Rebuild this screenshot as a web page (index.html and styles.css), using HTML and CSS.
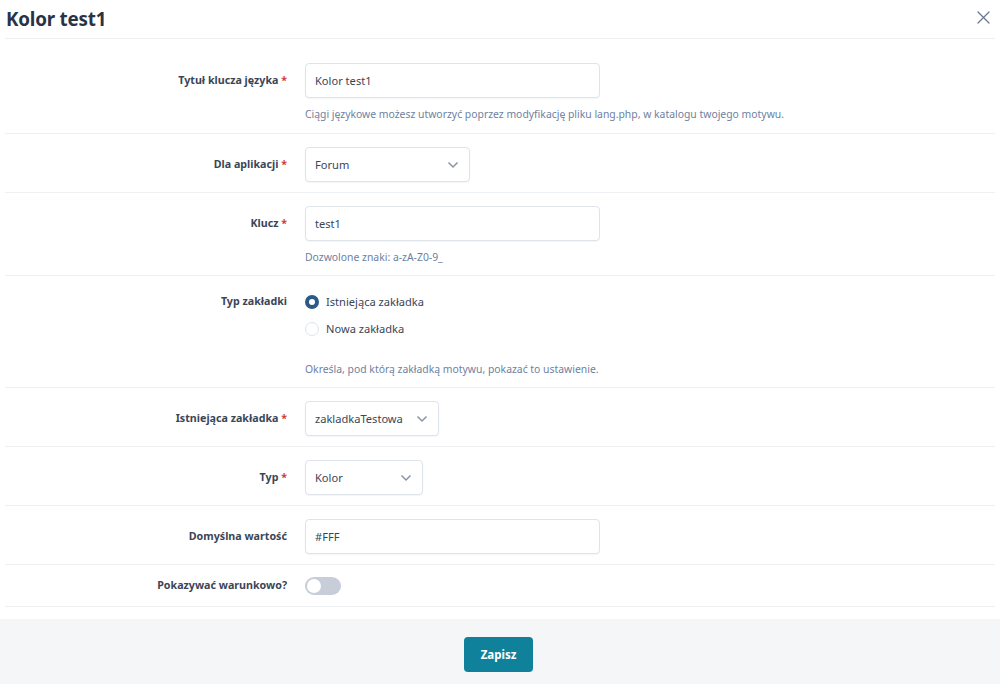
FILE: index.html
```html
<!DOCTYPE html>
<html lang="pl">
<head>
<meta charset="utf-8">
<title>Kolor test1</title>
<link rel="stylesheet" href="styles.css">
</head>
<body>
<div class="dialog">
  <header class="dialog-head">
    <h1 class="dialog-title">Kolor test1</h1>
    <button class="close" aria-label="Zamknij">
      <svg width="13" height="13" viewBox="0 0 13 13"><path d="M1 1L12 12M12 1L1 12" stroke="#6b7891" stroke-width="1.3" fill="none" stroke-linecap="round"/></svg>
    </button>
  </header>

  <form class="form">
    <div class="row row-first">
      <label class="label">Tytuł klucza języka <span class="req">*</span></label>
      <div class="field">
        <div class="input wide">Kolor test1</div>
        <p class="help">Ciągi językowe możesz utworzyć poprzez modyfikację pliku lang.php, w katalogu twojego motywu.</p>
      </div>
    </div>

    <div class="row">
      <label class="label">Dla aplikacji <span class="req">*</span></label>
      <div class="field">
        <div class="input select sel-app">Forum<span class="chev"><svg width="12" height="8" viewBox="0 0 12 8"><path d="M1.5 1.5L6 6L10.5 1.5" stroke="#8a93a6" stroke-width="1.5" fill="none"/></svg></span></div>
      </div>
    </div>

    <div class="row">
      <label class="label">Klucz <span class="req">*</span></label>
      <div class="field">
        <div class="input wide">test1</div>
        <p class="help">Dozwolone znaki: a-zA-Z0-9_</p>
      </div>
    </div>

    <div class="row row-radio">
      <label class="label">Typ zakładki</label>
      <div class="field">
        <div class="radios">
          <div class="radio-line"><span class="radio checked"></span>Istniejąca zakładka</div>
          <div class="radio-line"><span class="radio"></span>Nowa zakładka</div>
        </div>
        <p class="help help-radio">Określa, pod którą zakładką motywu, pokazać to ustawienie.</p>
      </div>
    </div>

    <div class="row">
      <label class="label">Istniejąca zakładka <span class="req">*</span></label>
      <div class="field">
        <div class="input select sel-tab">zakladkaTestowa<span class="chev"><svg width="12" height="8" viewBox="0 0 12 8"><path d="M1.5 1.5L6 6L10.5 1.5" stroke="#8a93a6" stroke-width="1.5" fill="none"/></svg></span></div>
      </div>
    </div>

    <div class="row">
      <label class="label">Typ <span class="req">*</span></label>
      <div class="field">
        <div class="input select sel-type">Kolor<span class="chev"><svg width="12" height="8" viewBox="0 0 12 8"><path d="M1.5 1.5L6 6L10.5 1.5" stroke="#8a93a6" stroke-width="1.5" fill="none"/></svg></span></div>
      </div>
    </div>

    <div class="row">
      <label class="label">Domyślna wartość</label>
      <div class="field">
        <div class="input wide">#FFF</div>
      </div>
    </div>

    <div class="row row-toggle">
      <label class="label">Pokazywać warunkowo?</label>
      <div class="field">
        <span class="toggle"><span class="knob"></span></span>
      </div>
    </div>
  </form>

  <footer class="dialog-foot">
    <button class="save" type="button">Zapisz</button>
  </footer>
</div>
</body>
</html>
```

FILE: styles.css
```css
* { box-sizing: border-box; }
html, body { margin: 0; padding: 0; background: #fff; }
body {
  font-family: "Noto Sans", "Open Sans", sans-serif;
  color: #3b4558;
  font-size: 11px;
}
.dialog { width: 1000px; height: 684px; display: flex; flex-direction: column; }
.dialog-head {
  height: 39px;
  margin: 0 5px;
  border-bottom: 1px solid #eef0f3;
  display: flex;
  align-items: center;
  justify-content: space-between;
}
.dialog-title {
  margin: -1px 0 0 1px;
  font-size: 18.8px;
  font-weight: 700;
  color: #2a3346;
  letter-spacing: -0.2px;
}
.close {
  border: 0; background: none; padding: 0;
  width: 13px; height: 13px;
  margin-right: 5px; margin-top: -3px;
  display: flex;
}
.form { flex: 0 0 auto; }
.row {
  margin: 0 5px;
  display: grid;
  grid-template-columns: 290px 1fr;
  column-gap: 10px;
  padding: 13px 0 10px;
  border-bottom: 1px solid #eef0f3;
}
.row-first { padding-top: 24px; padding-bottom: 11px; }
.label {
  text-align: right;
  padding-right: 8px;
  padding-top: 9px;
  font-weight: 700;
  font-size: 10.7px;
  line-height: 16px;
  color: #3b4558;
}
.req { color: #d03b32; }
.field { min-width: 0; }
.input {
  height: 35px;
  border: 1px solid #dfe3ea;
  border-radius: 4px;
  box-shadow: 0 1px 1px rgba(40, 50, 70, 0.05);
  padding: 0 9px;
  display: flex;
  align-items: center;
  font-size: 11.1px;
  color: #3b4558;
  background: #fff;
  position: relative;
}
.wide { width: 295px; }
.select { justify-content: space-between; padding-right: 10px; }
.sel-app { width: 165px; }
.sel-tab { width: 134px; }
.sel-type { width: 118px; }
.chev { display: flex; }
.help {
  margin: 8px 0 0;
  height: 16px;
  line-height: 16px;
  font-size: 10.4px;
  color: #6e7f9f;
}
.row-radio { padding-top: 12px; }
.row-radio .label { padding-top: 5px; }
.radios { display: flex; flex-direction: column; }
.radio-line {
  height: 27px;
  display: flex;
  align-items: center;
  font-size: 11.1px;
  color: #3b4558;
}
.radio {
  width: 14px; height: 14px;
  border-radius: 50%;
  border: 1px solid #dfe3ea;
  margin-right: 7px;
  background: #fff;
}
.radio.checked { border: 4px solid #2d5986; }
.help-radio { margin-top: 19px; }
.row-toggle { padding: 12px 0 11px; }
.row-toggle .label { padding-top: 0; }
.toggle {
  display: block;
  width: 36px; height: 18px;
  border-radius: 9px;
  background: #c7cdd9;
  position: relative;
}
.knob {
  position: absolute;
  left: 2px; top: 2px;
  width: 14px; height: 14px;
  border-radius: 50%;
  background: #fff;
}
.dialog-foot {
  margin-top: 12px;
  flex: 1 1 auto;
  background: #f5f6f8;
  display: flex;
  justify-content: center;
  padding-top: 18px;
  padding-right: 3px;
}
.save {
  width: 69px; height: 35px;
  border: 0;
  border-radius: 4px;
  background: #10819a;
  color: #fff;
  font-family: inherit;
  font-weight: 700;
  font-size: 11.5px;
}
```
